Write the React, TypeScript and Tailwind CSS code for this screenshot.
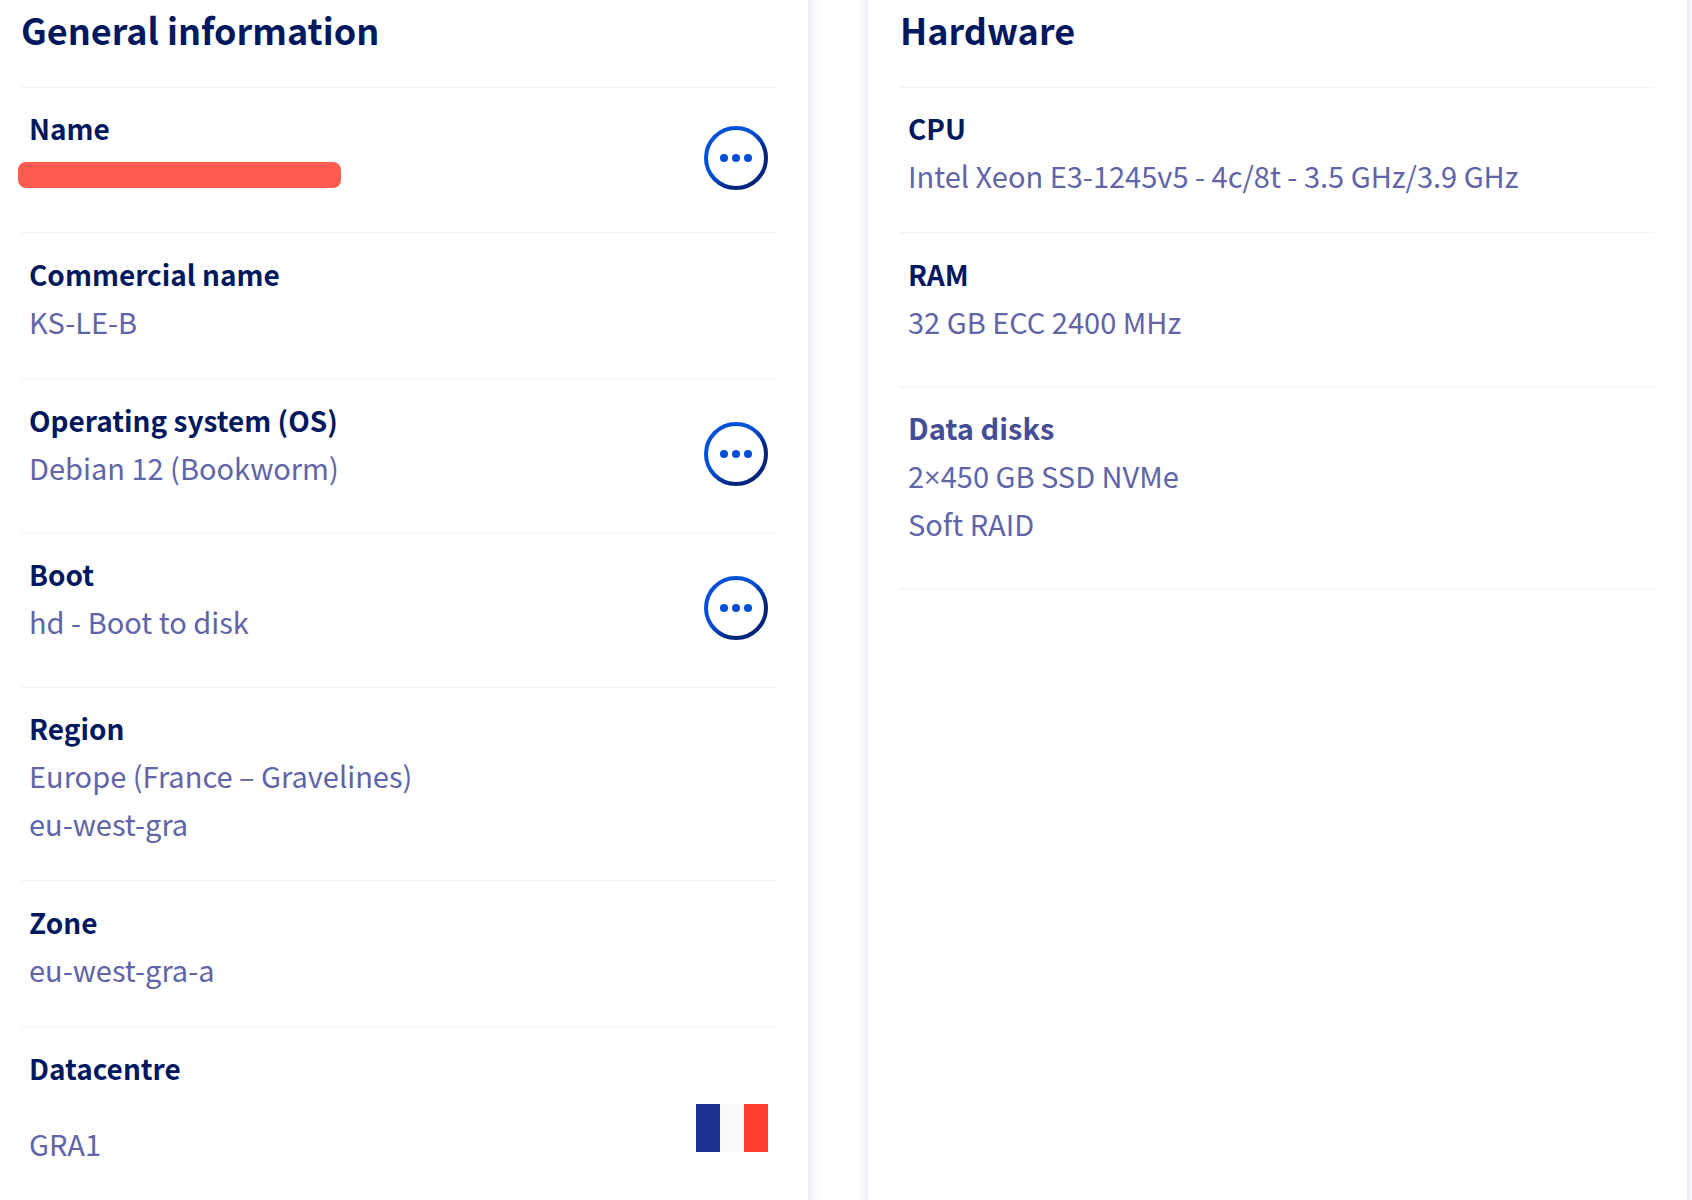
import { useId, type ReactNode } from "react"

type RowProps = {
  label: string
  labelClass?: string
  bodyClass?: string
  aside?: ReactNode
  children: ReactNode
}

function Row({
  label,
  labelClass = "text-[28px] leading-[50px] text-[#00185e]",
  bodyClass = "pb-[33px]",
  aside,
  children,
}: RowProps) {
  return (
    <div className="flex items-center justify-between border-t-2 border-[#f6f6f7] px-2">
      <dl className={`pt-[15px] ${bodyClass}`}>
        <dt className={`h-12 font-bold ${labelClass}`}>{label}</dt>
        {children}
      </dl>
      {aside}
    </div>
  )
}

function MenuButton({ label }: { label: string }) {
  const id = useId()

  return (
    <button type="button" aria-label={label} className="mb-1 size-16 rounded-full">
      <svg viewBox="0 0 64 64" className="size-16" fill="none">
        <defs>
          <linearGradient id={id} x1="8" y1="8" x2="56" y2="56" gradientUnits="userSpaceOnUse">
            <stop offset="0.4" stopColor="#0050d7" />
            <stop offset="0.75" stopColor="#00257a" />
          </linearGradient>
        </defs>
        <circle cx="32" cy="32" r="30" stroke={`url(#${id})`} strokeWidth="4" />
        <circle cx="20" cy="32" r="4" fill="#0050d7" />
        <circle cx="32" cy="32" r="4" fill="#0050d7" />
        <circle cx="44" cy="32" r="4" fill="#0050d7" />
      </svg>
    </button>
  )
}

function FrenchFlag() {
  return (
    <svg viewBox="0 0 72 48" className="mt-7 h-12 w-[72px]" role="img" aria-label="France">
      <path fill="#1a3393" d="M0 0h24v48H0z" />
      <path fill="#f9f9f9" d="M24 0h24v48H24z" />
      <path fill="#ff4131" d="M48 0h24v48H48z" />
    </svg>
  )
}

function Card({ title, children }: { title: string; children: ReactNode }) {
  return (
    <section className="bg-white px-8 pt-7 shadow-[0_0_10px_3px_rgba(0,14,156,0.1)]">
      <h2 className="h-[82px] text-[36px] leading-[50px] font-bold text-[#00185e]">
        {title}
      </h2>
      <div className="border-b-2 border-[#f6f6f7]">{children}</div>
    </section>
  )
}

export default function App() {
  return (
    <main className="flex min-h-screen overflow-hidden bg-white font-['Noto_Sans_CJK_SC',sans-serif] text-[29px] leading-[48px] text-[#6164a6]">
      <div className="-mt-6 -mb-6 mr-[5px] -ml-[11px] grid grow grid-cols-2 gap-[60px]">
        <Card title="General information">
          <Row label="Name" aside={<MenuButton label="Name actions" />}>
            <dd className="flex h-12 items-center">
              {/* redacted value */}
              <span className="-ml-[11px] h-[26px] w-[323px] rounded-lg bg-[#ff5c50]" />
            </dd>
          </Row>
          <Row label="Commercial name">
            <dd>KS-LE-B</dd>
          </Row>
          <Row
            label="Operating system (OS)"
            bodyClass="pb-[41px]"
            aside={<MenuButton label="Operating system actions" />}
          >
            <dd>Debian 12 (Bookworm)</dd>
          </Row>
          <Row label="Boot" bodyClass="pb-[41px]" aside={<MenuButton label="Boot actions" />}>
            <dd>hd - Boot to disk</dd>
          </Row>
          <Row label="Region">
            <dd>Europe (France – Gravelines)</dd>
            <dd>eu-west-gra</dd>
          </Row>
          <Row label="Zone">
            <dd>eu-west-gra-a</dd>
          </Row>
          <Row label="Datacentre" aside={<FrenchFlag />}>
            <dd className="mt-7">GRA1</dd>
          </Row>
        </Card>

        <Card title="Hardware">
          <Row label="CPU">
            <dd>Intel Xeon E3-1245v5 - 4c/8t - 3.5 GHz/3.9 GHz</dd>
          </Row>
          <Row label="RAM" bodyClass="pb-[41px]">
            <dd>32 GB ECC 2400 MHz</dd>
          </Row>
          <Row label="Data disks" labelClass="text-[#454e95]" bodyClass="pb-[41px]">
            <dd className="h-12">
              2<span className="font-['Open_Sans',sans-serif]">×</span>450 GB SSD NVMe
            </dd>
            <dd>Soft RAID</dd>
          </Row>
        </Card>
      </div>
    </main>
  )
}
